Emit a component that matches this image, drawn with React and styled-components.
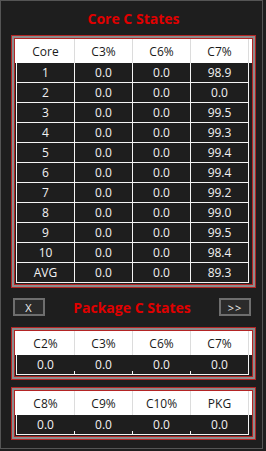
import React from 'react'
import styled, { createGlobalStyle } from 'styled-components'

const GlobalStyle = createGlobalStyle`
    html, body {
        margin: 0;
        padding: 0;
        background: #1e1e1e;
    }
    body {
        font-family: 'Open Sans', 'Noto Sans', 'Liberation Sans', sans-serif;
    }
`

const coreRows = [
    ['1', '0.0', '0.0', '98.9'],
    ['2', '0.0', '0.0', '0.0'],
    ['3', '0.0', '0.0', '99.5'],
    ['4', '0.0', '0.0', '99.3'],
    ['5', '0.0', '0.0', '99.4'],
    ['6', '0.0', '0.0', '99.4'],
    ['7', '0.0', '0.0', '99.2'],
    ['8', '0.0', '0.0', '99.0'],
    ['9', '0.0', '0.0', '99.5'],
    ['10', '0.0', '0.0', '98.4'],
    ['AVG', '0.0', '0.0', '89.3'],
]

const packageTables = [
    { head: ['C2%', 'C3%', 'C6%', 'C7%'], values: ['0.0', '0.0', '0.0', '0.0'] },
    { head: ['C8%', 'C9%', 'C10%', 'PKG'], values: ['0.0', '0.0', '0.0', '0.0'] },
]

export default function App() {
    return (
        <>
            <GlobalStyle />
            <Window>
                <Title>Core C States</Title>
                <Frame>
                    <HeadRow>
                        {['Core', 'C3%', 'C6%', 'C7%'].map((h) => (
                            <HeadCell key={h}>{h}</HeadCell>
                        ))}
                    </HeadRow>
                    {coreRows.map((row) => (
                        <DataRow key={row[0]}>
                            {row.map((v, i) => (
                                <DataCell key={i}>{v}</DataCell>
                            ))}
                        </DataRow>
                    ))}
                </Frame>

                <ButtonRow>
                    <Button>X</Button>
                    <SubTitle>Package C States</SubTitle>
                    <Button>&gt;&gt;</Button>
                </ButtonRow>

                {packageTables.map((t, n) => (
                    <Frame key={n} $gap={n > 0}>
                        <HeadRow>
                            {t.head.map((h) => (
                                <HeadCell key={h}>{h}</HeadCell>
                            ))}
                        </HeadRow>
                        <DataRow>
                            {t.values.map((v, i) => (
                                <DataCell key={i} $ticks>
                                    {v}
                                </DataCell>
                            ))}
                        </DataRow>
                    </Frame>
                ))}
            </Window>
        </>
    )
}

const Window = styled.div`
    box-sizing: border-box;
    width: 263px;
    height: 449px;
    border: 1px solid #555555;
    background: #1e1e1e;
    padding: 0 0 0 10px;
`

const Title = styled.div`
    height: 34px;
    width: 245px;
    display: flex;
    align-items: center;
    justify-content: center;
    color: #e00000;
    font-size: 14px;
    font-weight: 700;
`

const Frame = styled.div`
    box-sizing: border-box;
    width: 245px;
    margin-top: ${({ $gap }) => ($gap ? '7px' : '0')};
    border: 1px solid #b32424;
    box-shadow: inset 0 0 0 2px #8c8c8c, inset 0 0 0 3px #b32424;
    padding: 3px 3px 4px;
    background: #1e1e1e;
`

const HeadRow = styled.div`
    display: flex;
    height: 24px;
    background: #ffffff;
    padding-left: 1px;
`

const HeadCell = styled.div`
    box-sizing: border-box;
    width: 58px;
    height: 24px;
    display: flex;
    align-items: center;
    justify-content: center;
    border-right: 1px solid #dcdcdc;
    color: #1a1a1a;
    font-size: 12px;

    &:first-child {
        width: 59px;
        border-left: 1px solid #ffffff;
    }
`

const DataRow = styled.div`
    display: flex;
    height: 20px;
    padding-left: 1px;
`

const DataCell = styled.div`
    box-sizing: border-box;
    width: 58px;
    height: 20px;
    display: flex;
    align-items: center;
    justify-content: center;
    border-bottom: 1px solid #f4f4f4;
    border-right: 1px solid ${({ $ticks }) => ($ticks ? 'transparent' : '#f4f4f4')};
    background: ${({ $ticks }) =>
        $ticks ? 'linear-gradient(#f4f4f4, #f4f4f4) right bottom / 1px 4px no-repeat' : 'none'};
    background-origin: border-box;
    color: #f2f2f2;
    font-size: 12px;

    &:first-child {
        width: 59px;
        border-left: 1px solid #f4f4f4;
    }

    &:last-child {
        border-right-color: #f4f4f4;
    }
`

const ButtonRow = styled.div`
    box-sizing: border-box;
    width: 245px;
    height: 18px;
    margin: 10px 0 11px;
    padding: 0 5px 0 2px;
    display: flex;
    align-items: center;
`

const Button = styled.div`
    box-sizing: border-box;
    width: 32px;
    height: 18px;
    border: 2px solid #6e6e6e;
    background: #2b2b2b;
    color: #f0f0f0;
    font-size: 11px;
    letter-spacing: 1px;
    display: flex;
    align-items: center;
    justify-content: center;
`

const SubTitle = styled.div`
    flex: 1;
    text-align: center;
    color: #e00000;
    font-size: 14px;
    font-weight: 700;
`
